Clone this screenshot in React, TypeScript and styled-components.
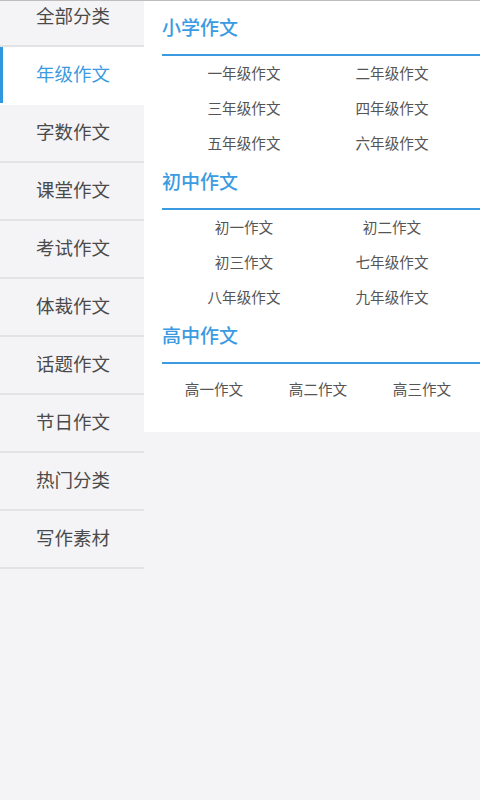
import { useLayoutEffect, useRef } from 'react'
import styled, { createGlobalStyle } from 'styled-components'

const GlobalStyle = createGlobalStyle`
  html, body, #root {
    margin: 0;
    padding: 0;
    height: 100%;
  }
  body {
    background: #f4f4f6;
    font-family: 'Noto Sans CJK SC', 'Noto Sans', sans-serif;
  }
`

const Screen = styled.div`
  display: flex;
  flex-direction: column;
  height: 800px;
  border-top: 1px solid #bdbdbd;
  background: #f4f4f6;
  overflow: hidden;
`
const Columns = styled.div`
  flex: 1;
  display: flex;
  align-items: flex-start;
  min-height: 0;
`
const Sidebar = styled.div`
  width: 144px;
  flex-shrink: 0;
  height: 100%;
  overflow-y: auto;
  scrollbar-width: none;
  &::-webkit-scrollbar {
    display: none;
  }
`
const NavItem = styled.div<{ $active: boolean }>`
  height: 56px;
  box-sizing: content-box;
  display: flex;
  align-items: center;
  padding-left: 36px;
  font-size: 18.5px;
  color: ${({ $active }) => ($active ? '#3a9be2' : '#4a4a4a')};
  background: ${({ $active }) => ($active ? '#ffffff' : 'transparent')};
  border-bottom: 2px solid ${({ $active }) => ($active ? '#ffffff' : '#e3e3e5')};
  box-shadow: ${({ $active }) => ($active ? 'inset 3px 0 0 #2f96e0' : 'none')};
  & > span {
    margin-top: -4px;
  }
`
const Spacer = styled.div`
  height: 300px;
`
const Panel = styled.div`
  flex: 1;
  background: #ffffff;
  padding: 6px 16px 25px 18px;
`
const Section = styled.section``
const SectionTitle = styled.div`
  height: 49px;
  display: flex;
  align-items: center;
  font-size: 19px;
  font-weight: 500;
  color: #3a9be2;
  border-bottom: 2px solid #3a9be2;
  margin-right: -16px;
  box-sizing: border-box;
  padding-bottom: 8px;
`
const Grid = styled.div<{ $cols: number; $cell: number; $padTop: number }>`
  display: grid;
  grid-template-columns: repeat(${({ $cols }) => $cols}, ${({ $cell }) => $cell}px);
  justify-content: center;
  padding-top: ${({ $padTop }) => $padTop}px;
`
const Cell = styled.div`
  height: 35px;
  display: flex;
  align-items: center;
  justify-content: center;
  font-size: 14.6px;
  color: #555555;
  padding-bottom: 3px;
  box-sizing: border-box;
`

const NAV = ['全部分类', '年级作文', '字数作文', '课堂作文', '考试作文', '体裁作文', '话题作文', '节日作文', '热门分类', '写作素材']

const SECTIONS = [
  {
    title: '小学作文',
    cols: 2,
    cell: 148,
    padTop: 0,
    items: ['一年级作文', '二年级作文', '三年级作文', '四年级作文', '五年级作文', '六年级作文'],
  },
  {
    title: '初中作文',
    cols: 2,
    cell: 148,
    padTop: 0,
    items: ['初一作文', '初二作文', '初三作文', '七年级作文', '八年级作文', '九年级作文'],
  },
  {
    title: '高中作文',
    cols: 3,
    cell: 104,
    padTop: 8,
    items: ['高一作文', '高二作文', '高三作文'],
  },
]

export default function App() {
  const navRef = useRef<HTMLDivElement>(null)

  // the category list is scrolled a little, first row is cut at the top
  useLayoutEffect(() => {
    if (navRef.current) navRef.current.scrollTop = 12
  }, [])

  return (
    <>
      <GlobalStyle />
      <Screen>
        <Columns>
          <Sidebar ref={navRef}>
            {NAV.map((label, i) => (
              <NavItem key={label} $active={i === 1}>
                <span>{label}</span>
              </NavItem>
            ))}
            <Spacer />
          </Sidebar>
          <Panel>
            {SECTIONS.map((s) => (
              <Section key={s.title}>
                <SectionTitle>{s.title}</SectionTitle>
                <Grid $cols={s.cols} $cell={s.cell} $padTop={s.padTop}>
                  {s.items.map((it) => (
                    <Cell key={it}>{it}</Cell>
                  ))}
                </Grid>
              </Section>
            ))}
          </Panel>
        </Columns>
      </Screen>
    </>
  )
}
